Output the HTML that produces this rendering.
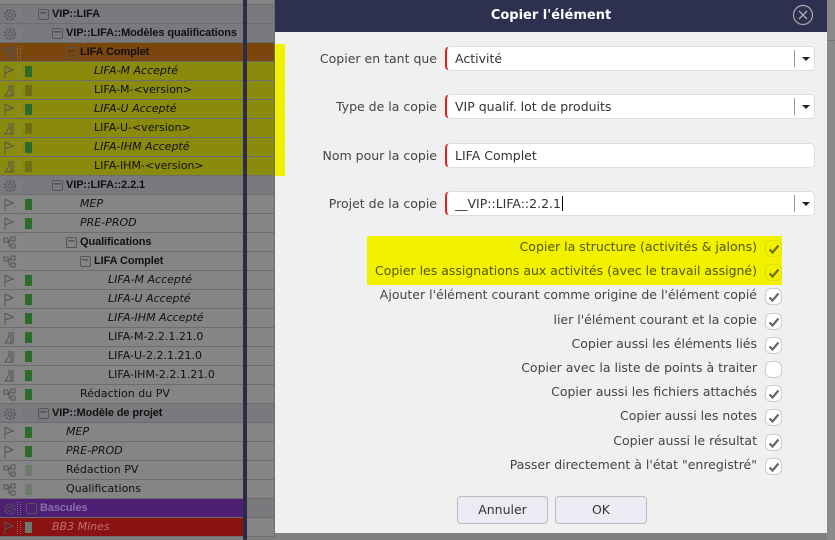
<!DOCTYPE html>
<html><head><meta charset="utf-8"><style>
*{box-sizing:border-box;margin:0;padding:0}
body{width:835px;height:540px;overflow:hidden;background:#808080;font-family:"DejaVu Sans","Liberation Sans",sans-serif;position:relative}
.row{position:absolute;left:0;width:243px;height:19px;background:#858585;border-bottom:1px solid #6d6d6d;font-size:11px;color:#111;line-height:18px;white-space:nowrap;overflow:hidden}
.hd{background:#79797e}
.y{background:#8a8a0c}
.o{background:#7a460c}
.p{background:#4e1f74;color:#8a6fa8}
.r{background:#8a1212;color:#c07070}
.it{font-style:italic}
.ic{position:absolute;left:3px;top:3px}
.dots{position:absolute;left:17px;top:3px;width:4px;height:13px;border-left:1px dotted #9a9a9a;border-right:1px dotted #9a9a9a;opacity:.6}
.sq{position:absolute;left:25px;top:4px;width:7px;height:11px;background:#2d6b2d}
.sq.g{background:#6f7a6f}.sq.v{background:#6e6e12}
.mn{position:absolute;top:4px;width:11px;height:11px;border:1px solid #555;border-radius:2px;font-size:10px;line-height:8px;text-align:center;color:#333;font-weight:normal}
.t{position:absolute;top:0}
.b{font-family:"Liberation Sans",sans-serif;font-weight:bold;font-size:11px;letter-spacing:-0.1px}
.gridc{position:absolute;left:247px;width:28px;height:19px;border-bottom:1px solid #6d6d6d;border-right:1px solid #6d6d6d;background:#858585}
#dlg{position:absolute;left:275px;top:0;width:552px;height:533px;background:#f0f0f0}
#tb{height:32px;background:#2e3050;color:#fff;font-weight:bold;font-size:13px;text-align:center;line-height:32px}
.lbl{position:absolute;right:390px;font-size:12.5px;color:#444;text-align:right;white-space:nowrap}
.fld{position:absolute;left:170px;width:370px;height:25px;background:#fff;border:1px solid #ddd;border-left:2px solid #e02020;border-radius:5px;font-size:12.5px;color:#333;line-height:23px;padding-left:8px}
.dd{position:absolute;right:0;top:3px;width:20px;height:17px;border-left:1px solid #999}
.dd:after{content:"";position:absolute;left:7px;top:7px;border-left:4px solid transparent;border-right:4px solid transparent;border-top:4px solid #222}
.ck{position:absolute;left:0;width:100%;height:24px}
.ck span{position:absolute;right:70px;font-size:12.5px;color:#444;top:3px;white-space:nowrap}
.ck i{position:absolute;left:490px;top:4px;width:17px;height:17px;background:#fff;border:1px solid #ccc;border-radius:6px}
.ck i svg{position:absolute;left:2px;top:2px}
.btn{position:absolute;top:496px;height:28px;background:#eceaf2;border:1px solid #bbb;border-radius:4px;font-size:12.5px;color:#333;text-align:center;line-height:26px}
</style></head><body>

<div id="tree"></div>
<div style="position:absolute;left:243px;top:0;width:4px;height:540px;background:#2a2c48"></div>

<div id="dlg">
<div id="tb">Copier l'élément</div>
<svg style="position:absolute;left:517px;top:4px" width="22" height="22"><circle cx="11" cy="11" r="9.5" fill="none" stroke="#aaa" stroke-width="1.2"/><path d="M7 7L15 15M15 7L7 15" stroke="#aaa" stroke-width="1.3"/></svg>
<div class="lbl" style="top:51px">Copier en tant que</div>
<div class="fld" style="top:46px">Activité<div class="dd"></div></div>
<div class="lbl" style="top:99px">Type de la copie</div>
<div class="fld" style="top:94px">VIP qualif. lot de produits<div class="dd"></div></div>
<div class="lbl" style="top:148px">Nom pour la copie</div>
<div class="fld" style="top:143px">LIFA Complet</div>
<div class="lbl" style="top:196px">Projet de la copie</div>
<div class="fld" style="top:191px">__VIP::LIFA::2.2.1<span style="border-left:1px solid #000;margin-left:1px"></span><div class="dd"></div></div>
<div style="position:absolute;left:92px;top:236px;width:415px;height:49px;background:#f2f200"></div>
<div id="cks"></div>
<div class="btn" style="left:182px;width:91px">Annuler</div>
<div class="btn" style="left:280px;width:92px">OK</div>
</div>
<div style="position:absolute;left:275px;top:44px;width:10px;height:132px;background:#f2f200"></div>
<div style="position:absolute;left:827px;top:0;width:8px;height:540px;background:#8a8a8a"></div>
<div style="position:absolute;left:827px;top:40px;width:8px;height:1px;background:#777"></div>

<script>
var flag='<svg class="ic" width="12" height="14"><path d="M2 1V13M2 1L10 5L2 8" fill="none" stroke="#555" stroke-width="1"/></svg>';
var gear='<svg class="ic" width="14" height="14"><circle cx="7" cy="7" r="5" fill="none" stroke="#555" stroke-width="1.5" stroke-dasharray="2 1.3"/><circle cx="7" cy="7" r="2.2" fill="none" stroke="#555"/></svg>';
var hier='<svg class="ic" width="14" height="14"><rect x="1" y="2" width="4" height="4" fill="none" stroke="#555"/><rect x="8" y="1" width="4" height="4" fill="none" stroke="#555"/><rect x="8" y="8" width="4" height="4" fill="none" stroke="#555"/><path d="M5 4H8M6 4V10H8" stroke="#555" fill="none"/></svg>';
var flask='<svg class="ic" width="12" height="14"><path d="M6 1V6L2 12H10V1M8 1V12" fill="none" stroke="#555"/></svg>';
var R=[
['hd',gear,'',38,'VIP::LIFA',1],
['hd',gear,'',52,'VIP::LIFA::Modèles qualifications',1],
['o',hier,'',66,'LIFA Complet',1],
['y it',flag,'sq',94,'LIFA-M Accepté'],
['y',flask,'sq v',94,'LIFA-M-&lt;version&gt;'],
['y it',flag,'sq',94,'LIFA-U Accepté'],
['y',flask,'sq v',94,'LIFA-U-&lt;version&gt;'],
['y it',flag,'sq',94,'LIFA-IHM Accepté'],
['y',flask,'sq v',94,'LIFA-IHM-&lt;version&gt;'],
['hd',gear,'',52,'VIP::LIFA::2.2.1',1],
['it',flag,'sq',80,'MEP'],
['it',flag,'sq',80,'PRE-PROD'],
['',hier,'',66,'Qualifications',1],
['',hier,'',80,'LIFA Complet',1],
['it',flag,'sq',108,'LIFA-M Accepté'],
['it',flag,'sq',108,'LIFA-U Accepté'],
['it',flag,'sq',108,'LIFA-IHM Accepté'],
['',flask,'sq',108,'LIFA-M-2.2.1.21.0'],
['',flask,'sq',108,'LIFA-U-2.2.1.21.0'],
['',flask,'sq',108,'LIFA-IHM-2.2.1.21.0'],
['',hier,'sq',80,'Rédaction du PV'],
['hd',gear,'',38,'VIP::Modèle de projet',1],
['it',flag,'sq',66,'MEP'],
['it',flag,'sq',66,'PRE-PROD'],
['',hier,'sq g',66,'Rédaction PV'],
['',hier,'sq g',66,'Qualifications'],
['p',gear,'',26,'Bascules',1],
['r it',flag,'sq g',52,'BB3 Mines']
];
var h='<div class="row" style="top:-14px"></div><div class="gridc" style="top:-14px"></div>';
R.forEach(function(r,i){var top=5+19*i;
var mn='',tx=r[3],cls='t';
if(r[5]){mn='<div class="mn" style="left:'+r[3]+'px">−</div>';tx=r[3]+14;cls='t b';}
h+='<div class="row '+r[0]+'" style="top:'+top+'px">'+r[1]+'<div class="dots"></div>'+(r[2]?'<div class="'+r[2]+'"></div>':'')+mn+'<div class="'+cls+'" style="left:'+tx+'px;">'+r[4]+'</div></div>';
var c0=r[0].split(' ')[0];
var gc=c0=='o'?'#7a460c':(c0=='y'?'#8a8a0c':(c0=='hd'?'#79797e':(c0=='p'?'#79797e':'#858585')));
h+='<div class="gridc" style="top:'+top+'px;background:'+gc+'"></div>';
});
document.getElementById('tree').innerHTML=h;
var C=[['Copier la structure (activités &amp; jalons)',1],['Copier les assignations aux activités (avec le travail assigné)',1],["Ajouter l'élément courant comme origine de l'élément copié",1],["lier l'élément courant et la copie",1],['Copier aussi les éléments liés',1],['Copier avec la liste de points à traiter',0],['Copier aussi les fichiers attachés',1],['Copier aussi les notes',1],['Copier aussi le résultat',1],['Passer directement à l\'état "enregistré"',1]];
var c='';
C.forEach(function(x,i){var top=236+24.2*i;var hl=i<2;
c+='<div class="ck" style="top:'+top+'px"><span'+(hl?' style="color:#555500"':'')+'>'+x[0]+'</span><i'+(hl?' style="background:#f2f200;border-color:#e0e000"':'')+'>'+(x[1]?'<svg width="12" height="12"><path d="M1.5 6.5L4.5 9.5L10.5 2.5" fill="none" stroke="'+(hl?'#6b6b00':'#666')+'" stroke-width="2.2"/></svg>':'')+'</i></div>';});
document.getElementById('cks').innerHTML=c;
</script>
</body></html>
